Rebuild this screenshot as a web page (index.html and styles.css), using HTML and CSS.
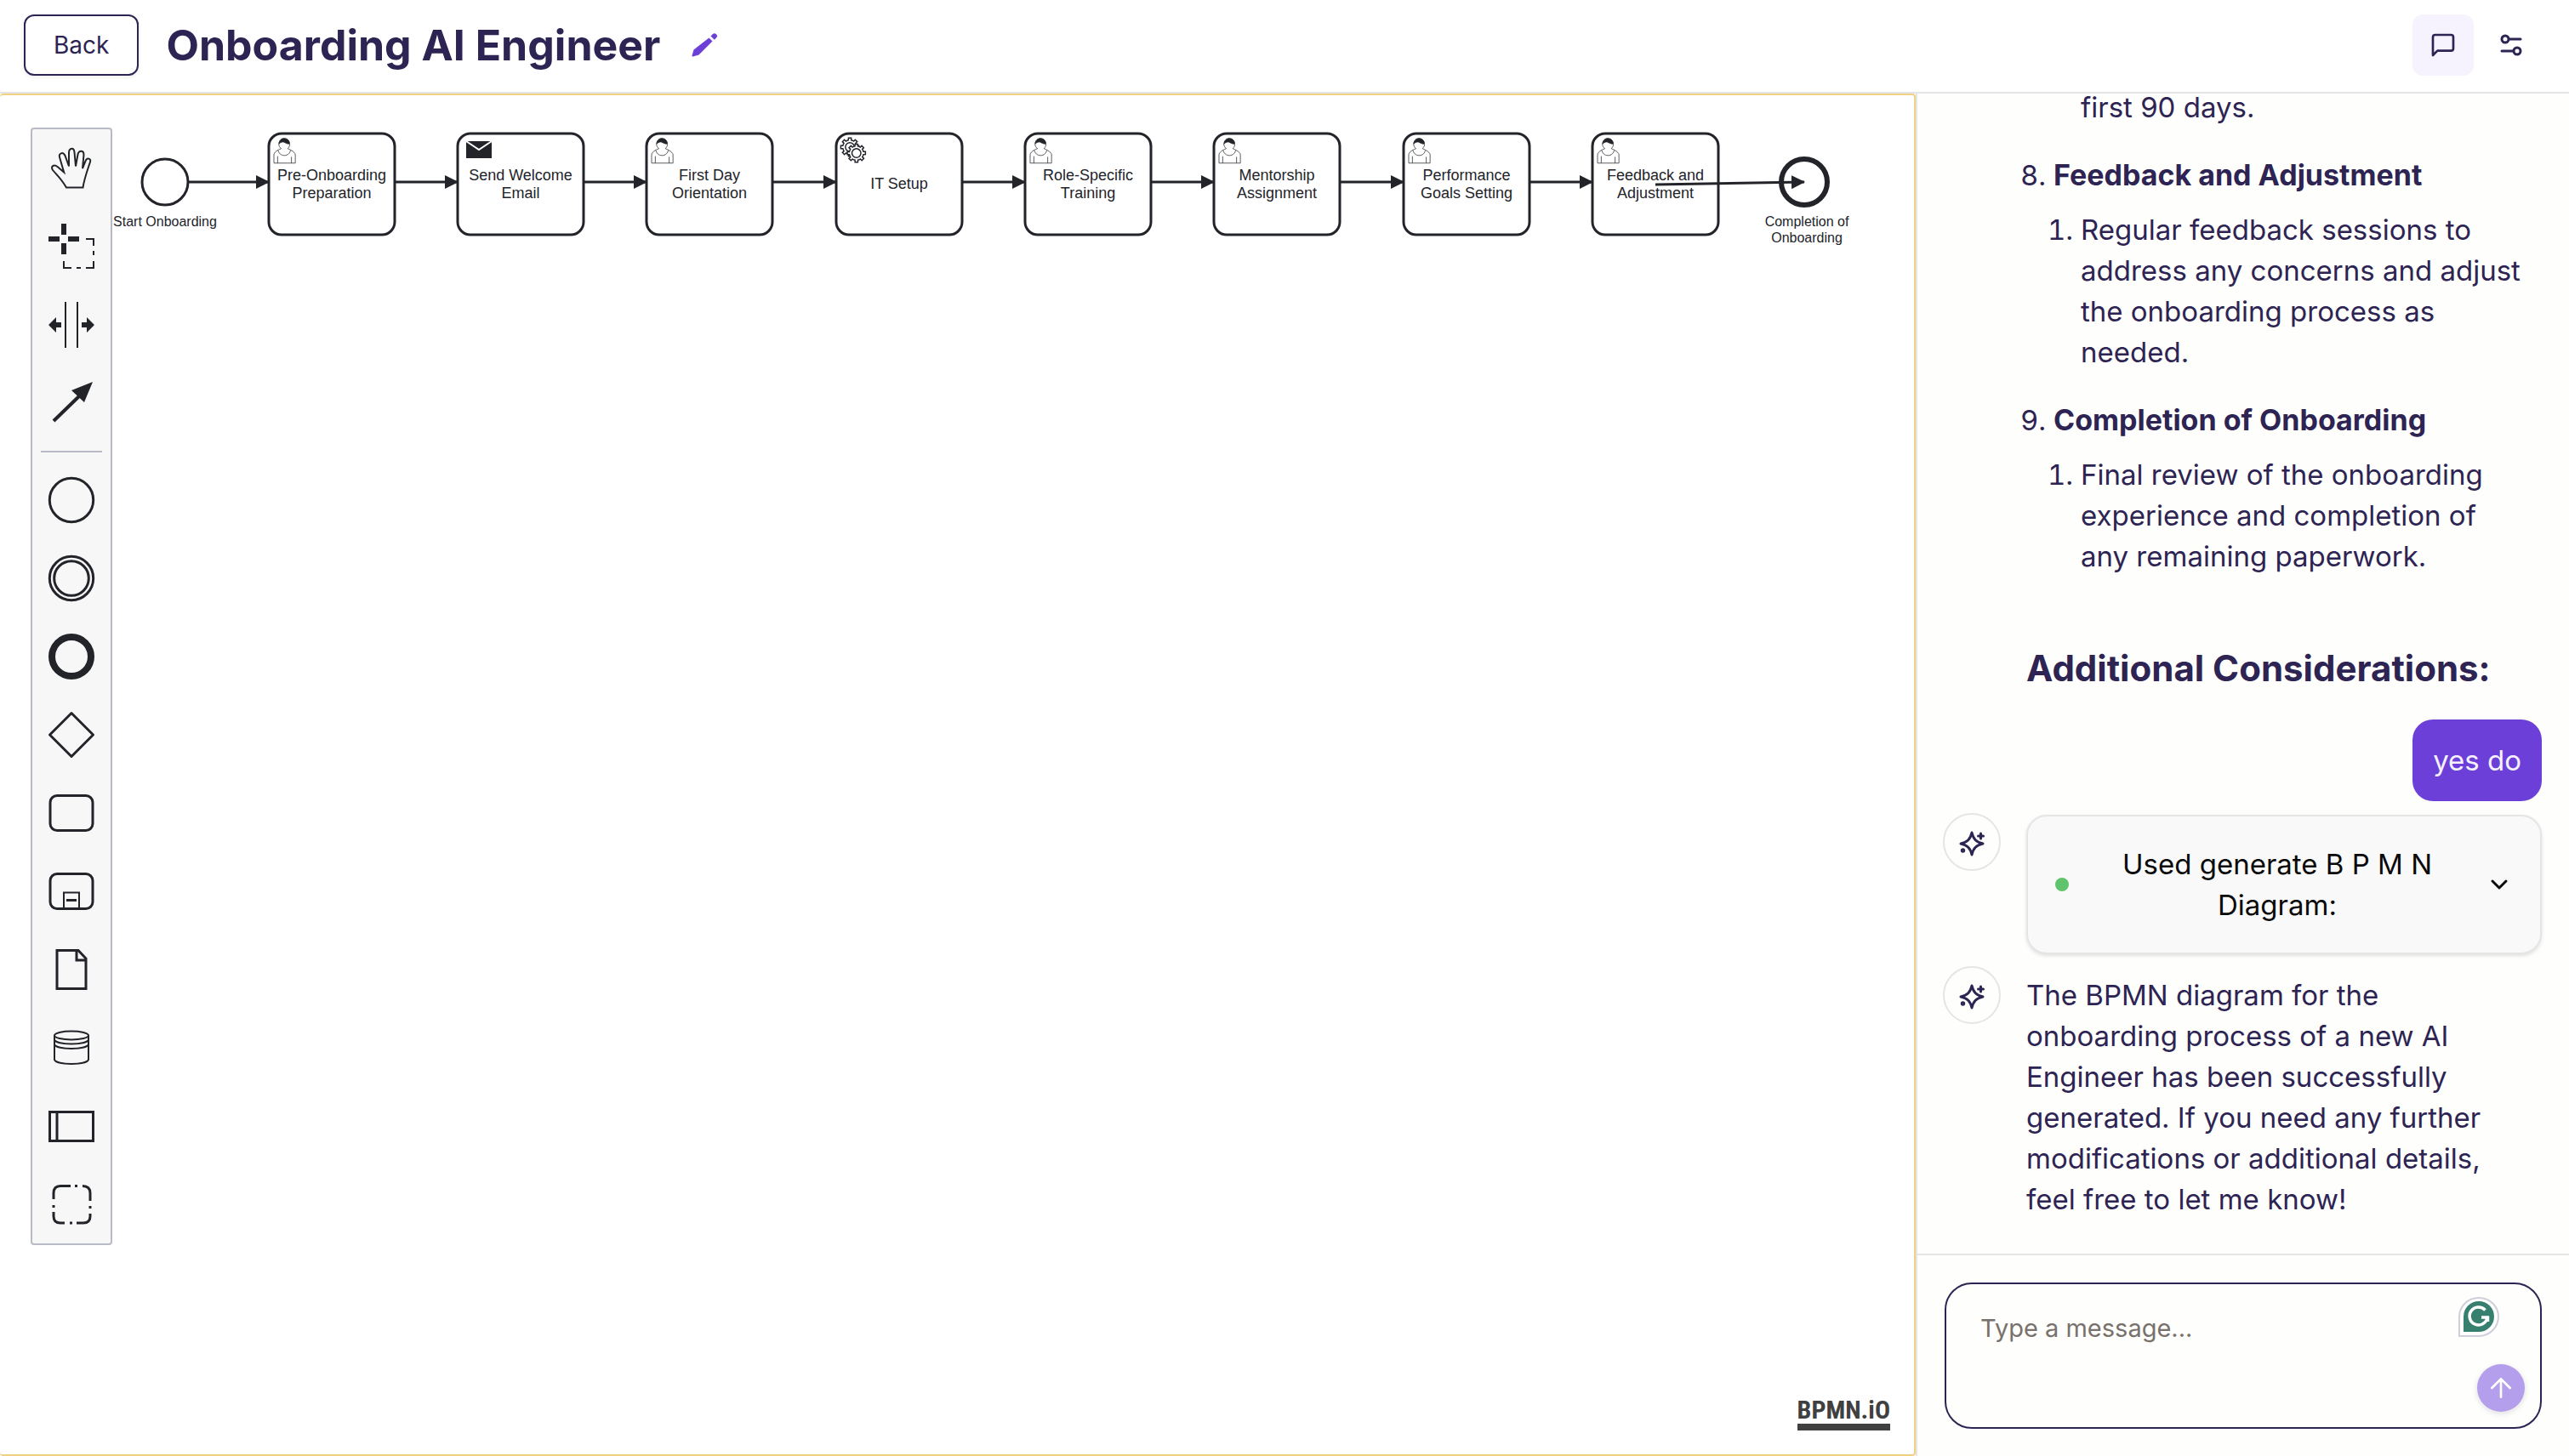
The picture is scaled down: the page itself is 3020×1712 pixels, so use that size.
FILE: index.html
```html
<!DOCTYPE html>
<html lang="en">
<head>
<meta charset="utf-8">
<title>Onboarding AI Engineer</title>
<meta name="viewport" content="width=device-width, initial-scale=1">
<link rel="stylesheet" href="styles.css">
</head>
<body>
<header class="topbar">
  <button class="back" type="button">Back</button>
  <h1 class="title">Onboarding AI Engineer</h1>
  <button class="icon-plain" type="button" aria-label="Rename">
    <svg width="32" height="32" viewBox="0 0 32 32" fill="#6c40d8"><path d="M20.500 7.500l4 4L8.500 27.500 1.500 29.500a.8.8 0 0 1-1-1L2.500 21.500Q12 14 20.500 7.500z" transform="translate(1 0)"/><path d="M22.500 5.500l2.200-2.200a3 3 0 0 1 4.300 4.300L26.800 9.800z" transform="translate(1 0)"/></svg>
  </button>
  <nav class="tools">
    <button class="tool tool-active" type="button" aria-label="Chat">
      <svg width="32" height="32" viewBox="0 0 24 24" fill="none" stroke="#2d2453" stroke-width="2" stroke-linecap="round" stroke-linejoin="round"><path d="M21 15a2 2 0 0 1-2 2H7l-4 4V5a2 2 0 0 1 2-2h14a2 2 0 0 1 2 2z"/></svg>
    </button>
    <button class="tool" type="button" aria-label="Settings">
      <svg width="28" height="28" viewBox="0 0 28 28" fill="none" stroke="#2d2453" stroke-width="3" stroke-linecap="round"><circle cx="7" cy="7" r="4"/><path d="M12 7h13M3 21h13"/><circle cx="21" cy="21" r="4"/></svg>
    </button>
  </nav>
</header>
<main class="workspace">
  <section class="canvas" aria-label="Process diagram">
    <svg class="diagram" width="100%" height="100%">
      <defs>
        <marker id="arrow" viewBox="0 0 16 16" refX="15" refY="8" markerWidth="16" markerHeight="16" markerUnits="userSpaceOnUse" orient="auto"><path d="M0 0L16 8L0 16z" fill="#22242a"/></marker>
        <g id="user" transform="scale(1.480)" stroke="#22242a" stroke-width=".5">
          <path fill="#fff" d="m15 12c.909-.845 1.594-2.049 1.594-3.385 0-2.554-1.805-4.622-4.357-4.622-2.552 0-4.288 2.068-4.288 4.622 0 1.348.974 2.562 1.896 3.405-.529.187-5.669 2.097-5.794 4.756v6.718h17v-6.718c0-2.298-5.528-4.595-6.051-4.776zm-8 6l0 5.500m11 0l0-5"/>
          <path fill="#fff" d="m15 12m2.162 1.009c0 2.447-2.158 4.431-4.821 4.431-2.665 0-4.822-1.981-4.822-4.431"/>
          <path fill="#22242a" d="m15 12m-6.900-3.800c0 0 2.251-2.358 4.274-1.177 2.024 1.181 4.221 1.537 4.124.965-.098-.57-.117-3.791-4.191-4.136-3.572.001-4.208 3.670-4.207 4.348z"/>
        </g>
        <path id="gear" d="m12 18v-1.713c.352-.07.704-.178 1.048-.321.344-.145.666-.321.966-.521l1.194 1.180 1.567-1.577-1.195-1.180c.403-.614.683-1.299.825-2.018l1.622-.01v-2.220l-1.637.01c-.073-.352-.178-.7-.324-1.044-.145-.344-.321-.664-.523-.962l1.131-1.136-1.583-1.563-1.130 1.136c-.614-.401-1.303-.681-2.023-.822l.009-1.619h-2.241l.004 1.631c-.354.074-.705.180-1.050.324-.344.144-.665.321-.964.520l-1.170-1.158-1.567 1.579 1.168 1.157c-.403.613-.683 1.298-.825 2.017l-1.659.003v2.222l1.672-.006c.073.351.180.702.324 1.045.145.344.321.664.523.961l-1.199 1.197 1.584 1.560 1.196-1.193c.614.403 1.303.682 2.023.823l.001 1.699h2.227zm.221-3.996c-1.789.750-3.858-.093-4.610-1.874-.752-1.783.091-3.846 1.880-4.596 1.788-.749 3.857.093 4.609 1.874.752 1.782-.091 3.846-1.880 4.596z"/>
        <g id="service" transform="scale(1.480)" stroke="#22242a" fill="#fff"><use href="#gear"/><circle cx="16.300" cy="15.500" r="5" stroke="none"/><use href="#gear" x="5.200" y="4.800"/></g>
        <g id="send"><path fill="#22242a" d="M10 9h30v20H10z"/><path d="M10 9L25 19L40 9" fill="none" stroke="#fff" stroke-width="2"/></g>
      </defs>

      <g class="shape">
        <circle cx="194" cy="102" r="27"/>
        <circle cx="2121" cy="102" r="27" stroke-width="6"/>
        <rect x="316" y="45" width="148" height="119" rx="15"/>
        <rect x="538" y="45" width="148" height="119" rx="15"/>
        <rect x="760" y="45" width="148" height="119" rx="15"/>
        <rect x="983" y="45" width="148" height="119" rx="15"/>
        <rect x="1205" y="45" width="148" height="119" rx="15"/>
        <rect x="1427" y="45" width="148" height="119" rx="15"/>
        <rect x="1650" y="45" width="148" height="119" rx="15"/>
        <rect x="1872" y="45" width="148" height="119" rx="15"/>
      </g>
      <use href="#user" transform="translate(316 45)"/>
      <use href="#send" transform="translate(538 45)"/>
      <use href="#user" transform="translate(760 45)"/>
      <use href="#service" transform="translate(983 45)"/>
      <use href="#user" transform="translate(1205 45)"/>
      <use href="#user" transform="translate(1427 45)"/>
      <use href="#user" transform="translate(1650 45)"/>
      <use href="#user" transform="translate(1872 45)"/>

      <g class="task-text">
        <text><tspan x="390" y="100">Pre-Onboarding</tspan><tspan x="390" y="121">Preparation</tspan></text>
        <text><tspan x="612" y="100">Send Welcome</tspan><tspan x="612" y="121">Email</tspan></text>
        <text><tspan x="834" y="100">First Day</tspan><tspan x="834" y="121">Orientation</tspan></text>
        <text x="1057" y="110">IT Setup</text>
        <text><tspan x="1279" y="100">Role-Specific</tspan><tspan x="1279" y="121">Training</tspan></text>
        <text><tspan x="1501" y="100">Mentorship</tspan><tspan x="1501" y="121">Assignment</tspan></text>
        <text><tspan x="1724" y="100">Performance</tspan><tspan x="1724" y="121">Goals Setting</tspan></text>
        <text><tspan x="1946" y="100">Feedback and</tspan><tspan x="1946" y="121">Adjustment</tspan></text>
      </g>
      <g class="event-text">
        <text x="194" y="154">Start Onboarding</text>
        <text><tspan x="2124" y="154">Completion of</tspan><tspan x="2124" y="173">Onboarding</tspan></text>
      </g>

      <g class="flow">
        <path d="M221 102H316"/><path d="M464 102H538"/><path d="M686 102H760"/><path d="M908 102H983"/>
        <path d="M1131 102H1205"/><path d="M1353 102H1427"/><path d="M1575 102H1650"/><path d="M1798 102H1872"/>
        <path d="M1946 105L2121 102"/>
      </g>
    </svg>

    <div class="palette" role="toolbar" aria-label="Diagram tools">
      <button type="button" aria-label="Hand tool"><svg viewBox="0 0 92 92"><path stroke-width="2" d="M40 68.500H59.500C61 58 65.500 46 68 38.500C69.500 34 64 33 62.500 37.500L59 46L60.500 30C60.500 24 54.500 24.500 53.500 29.500L51 43.500L49.500 27C49 21 43.500 21.500 43 27L43 43.500L38.500 31C36 26 30.500 28 32.200 33.500L37.200 50.500L29.500 44C25.500 41 21 43.500 24 48C28 53 34 58 40 68.500z"/></svg></button>
      <button type="button" aria-label="Lasso tool"><svg viewBox="0 0 92 92"><path class="solid" d="M19 34h13v6H19zM42 34h13v6H42zM34 19h6v13h-6zM34 42h6v13h-6z"/><path stroke-width="2" d="M63 37h9v8M72 51v5M72 63v8h-9M57 71h-5M46 71h-9v-8"/></svg></button>
      <button type="button" aria-label="Space tool"><svg viewBox="0 0 92 92"><path stroke-width="2" d="M39 19v54M53 19v54"/><path class="solid" d="M19 46l9-9v6h6v6h-6v6zM73 46l-9-9v6h-6v6h6v6z"/></svg></button>
      <button type="button" aria-label="Connect tool"><svg viewBox="0 0 92 92"><path stroke-width="4" d="M25 67L58 35"/><path class="solid" d="M71 21L46 31L61 45z"/></svg></button>
      <hr>
      <button type="button" aria-label="Start event"><svg viewBox="0 0 92 92"><circle cx="46" cy="46" r="25.700"/></svg></button>
      <button type="button" aria-label="Intermediate event"><svg viewBox="0 0 92 92"><circle cx="46" cy="46" r="25.700"/><circle cx="46" cy="46" r="20.300"/></svg></button>
      <button type="button" aria-label="End event"><svg viewBox="0 0 92 92"><circle cx="46" cy="46" r="23" stroke-width="8"/></svg></button>
      <button type="button" aria-label="Gateway"><svg viewBox="0 0 92 92"><path stroke-linejoin="round" d="M46 20.500L71.500 46L46 71.500L20.500 46z"/></svg></button>
      <button type="button" aria-label="Task"><svg viewBox="0 0 92 92"><rect x="21" y="25.500" width="50" height="41" rx="8"/></svg></button>
      <button type="button" aria-label="Sub-process"><svg viewBox="0 0 92 92"><rect x="21" y="25.500" width="50" height="41" rx="8"/><path stroke-width="2" d="M37 66V47.500H55V66"/><path stroke-width="3" d="M40 56.500h12"/></svg></button>
      <button type="button" aria-label="Data object"><svg viewBox="0 0 92 92"><path d="M29 23.500H54L63 33V68.500H29zM52 23.500V35H63"/></svg></button>
      <button type="button" aria-label="Data store"><svg viewBox="0 0 92 92"><g stroke-width="2"><ellipse cx="46" cy="31.500" rx="20" ry="5"/><path d="M26 31.500V60C28 66.500 64 66.500 66 60V31.500M26 36.500C28 43 64 43 66 36.500M26 42C28 48.500 64 48.500 66 42"/></g></svg></button>
      <button type="button" aria-label="Participant"><svg viewBox="0 0 92 92"><path d="M20.500 29.500H71.500V63.500H20.500zM29 29V64"/></svg></button>
      <button type="button" aria-label="Group"><svg viewBox="0 0 92 92"><path d="M25 40V33Q25 24.500 33 24.500H45M50 24.500h3M59 24.500Q68 24.500 68 33V42M68 48v3M68 57V60Q68 68 60 68H52M47 68h-3M38 68H33Q25 68 25 60V55M25 50v-3"/></svg></button>
    </div>

    <a class="logo" href="#bpmn-io">BPMN.iO</a>
  </section>

  <aside class="chat">
    <div class="messages">
      <article class="message">
        <div class="message-body">
          <ol class="steps" start="8">
            <li class="continued"><p class="detail">first 90 days.</p></li>
            <li value="8"><strong>Feedback and Adjustment</strong>
              <ol><li>Regular feedback sessions to address any concerns and adjust the onboarding process as needed.</li></ol></li>
            <li><strong>Completion of Onboarding</strong>
              <ol><li>Final review of the onboarding experience and completion of any remaining paperwork.</li></ol></li>
          </ol>
          <h2>Additional Considerations:</h2>
        </div>
      </article>
      <p class="bubble">yes do</p>
      <article class="message">
        <span class="avatar"><svg width="36" height="36" viewBox="0 0 36 36"><use href="#sparkles"/></svg></span>
        <button class="tool-card" type="button">
          <span class="dot"></span>
          <span class="tool-name">Used generate B P M N Diagram:</span>
          <svg width="32" height="32" viewBox="0 0 32 32" fill="none" stroke="#0a0a0a" stroke-width="3" stroke-linecap="round" stroke-linejoin="round"><path d="M8 12l8 8 8-8"/></svg>
        </button>
      </article>
      <article class="message">
        <span class="avatar"><svg width="36" height="36" viewBox="0 0 36 36"><use href="#sparkles"/></svg></span>
        <p class="answer">The BPMN diagram for the onboarding process of a new AI Engineer has been successfully generated. If you need any further modifications or additional details, feel free to let me know!</p>
      </article>
    </div>
    <form class="composer">
      <div class="field">
        <textarea aria-label="Message" placeholder="Type a message..."></textarea>
        <span class="grammar"><svg width="48" height="48" viewBox="0 0 48 48"><path d="M1 46V23A23 22 0 0 1 47 23A23 23 0 0 1 24 46z" fill="#fff" stroke="#cfcfdc" stroke-width="2"/><path d="M6 41V23A18 18 0 1 1 24 41z" fill="#37806f"/><path d="M31.500 15.500A10.500 10.500 0 1 0 34 24H27M34.500 22.500V29" fill="none" stroke="#fff" stroke-width="3.500"/></svg></span>
        <button class="send" type="submit" aria-label="Send"><svg width="32" height="32" viewBox="0 0 24 24" fill="none" stroke="#fff" stroke-width="2" stroke-linecap="round" stroke-linejoin="round"><path d="M12 20V4M4 12l8-8 8 8"/></svg></button>
      </div>
    </form>
  </aside>
</main>
<svg class="sprite" width="0" height="0" aria-hidden="true"><defs>
  <g id="sparkles" fill="none" stroke="#2d2453" stroke-width="3" stroke-linecap="round" stroke-linejoin="round"><path d="M18 7C19.800 14.800 23.200 18.200 31 20C23.200 21.800 19.800 25.200 18 33C16.200 25.200 12.800 21.800 5 20C12.800 18.200 16.200 14.800 18 7z"/><path d="M28.500 8v6M25.500 11h6"/><circle cx="7.500" cy="28" r="1.200"/></g>
</defs></svg>
</body>
</html>
```
FILE: styles.css
```css
* { box-sizing: border-box; }

body {
  margin: 0;
  height: 100vh;
  display: flex;
  flex-direction: column;
  font-family: Inter, "Noto Sans", sans-serif;
  font-size: 33px;
  line-height: 48px;
  color: #2d2453;
  background: #fff;
}

button {
  font: inherit;
  color: inherit;
  background: none;
  border: 0;
  padding: 0;
  cursor: pointer;
}

svg { display: block; }
p, h1, h2 { margin: 0; }
.sprite { position: absolute; }

/* Top bar */
.topbar {
  display: flex;
  align-items: center;
  padding: 17px 32px 19px 28px;
  border-bottom: 2px solid #e5e5e8;
}
.back {
  height: 72px;
  padding: 0 33px;
  font-size: 28px;
  background: #fff;
  border: 2px solid #2d2453;
  border-radius: 12px;
  box-shadow: 0 2px 4px rgba(45, 36, 83, .08);
}
.title {
  margin-left: 32px;
  font-size: 50px;
  font-weight: 700;
  line-height: 64px;
}
.icon-plain { margin-left: 36px; }
.tools {
  display: flex;
  gap: 8px;
  margin-left: auto;
}
.tool {
  display: grid;
  place-items: center;
  width: 72px;
  height: 72px;
  border-radius: 12px;
}
.tool-active { background: #f6f3fe; }

/* Workspace */
.workspace {
  flex: 1;
  min-height: 0;
  display: flex;
}
.canvas {
  position: relative;
  flex: 1;
  min-width: 0;
  padding: 38px 36px;
  border: 2px solid #f0d182;
  border-left: 0;
  border-radius: 4px;
}
.diagram {
  position: absolute;
  inset: 0;
  font-family: "Liberation Sans", Arial, sans-serif;
}
.shape { fill: #fff; stroke: #22242a; stroke-width: 3; }
.flow { fill: none; stroke: #22242a; stroke-width: 3; }
.flow path { marker-end: url(#arrow); }
.task-text, .event-text { fill: #22242a; text-anchor: middle; font-size: 18px; }
.event-text { font-size: 16px; }

.palette {
  position: relative;
  display: flex;
  flex-direction: column;
  width: 96px;
  background: #f7f7f7;
  border: 2px solid #b8bac6;
  border-radius: 4px;
}
.palette button { height: 92px; }
.palette svg { fill: none; stroke: #22242a; stroke-width: 3; }
.palette .solid { fill: #22242a; stroke: none; }
.palette hr {
  width: 72px;
  margin: 10px auto;
  border: 0;
  border-top: 2px solid #b8bac6;
}

.logo {
  position: absolute;
  right: 28px;
  bottom: 28px;
  font-family: "Roboto Condensed", "Open Sans Condensed", "Liberation Sans", sans-serif;
  font-size: 30px;
  font-weight: 700;
  line-height: 32px;
  color: #404040;
  text-decoration: none;
  border-bottom: 8px solid #404040;
}

/* Chat */
.chat {
  display: flex;
  flex-direction: column;
  width: 768px;
  background: #fefefc;
  border-left: 2px solid #e5e5e8;
}
.messages {
  flex: 1;
  min-height: 0;
  overflow: hidden;
  display: flex;
  flex-direction: column;
  justify-content: flex-end;
  gap: 14px;
  padding: 0 32px 40px 30px;
}
.message {
  flex: none;
  display: flex;
  gap: 30px;
}
.message-body { margin-left: 98px; }
.steps, .steps ol { margin: 0; padding-left: 32px; }
.steps > li { margin-bottom: 32px; }
.steps > li > ol { margin-top: 16px; padding-right: 16px; }
.steps .continued { list-style: none; }
.steps strong { font-size: 34px; }
.detail { padding-left: 32px; }
.message h2 {
  margin: 76px 0 14px;
  font-size: 42px;
  line-height: 64px;
}
.bubble {
  flex: none;
  align-self: flex-end;
  padding: 24px;
  color: #f6f1fe;
  background: #6c40d8;
  border-radius: 24px;
}
.avatar {
  flex: none;
  display: grid;
  place-items: center;
  width: 68px;
  height: 68px;
  border: 2px solid #e5e5e5;
  border-radius: 50%;
}
.tool-card {
  flex: 1;
  display: flex;
  align-items: center;
  margin-top: 2px;
  padding: 32px;
  color: #0a0a0a;
  background: #f9f9f9;
  border: 2px solid #e5e5e5;
  border-radius: 24px;
  box-shadow: 0 2px 4px rgba(0, 0, 0, .12);
}
.dot {
  width: 16px;
  height: 16px;
  background: #60c46c;
  border-radius: 50%;
}
.tool-name { flex: 1; padding: 0 40px; }
.answer { padding: 10px 24px 0 0; }

.composer {
  padding: 32px;
  border-top: 2px solid #e5e5e5;
}
.field { position: relative; }
.field textarea {
  display: block;
  width: 100%;
  height: 172px;
  padding: 32px 40px;
  font: inherit;
  font-size: 29px;
  line-height: 40px;
  color: inherit;
  background: none;
  border: 2px solid #2d2453;
  border-radius: 32px;
  resize: none;
}
.field textarea::placeholder { color: #78716c; }
.grammar {
  position: absolute;
  top: 17px;
  right: 50px;
}
.send {
  position: absolute;
  right: 20px;
  bottom: 20px;
  display: grid;
  place-items: center;
  width: 56px;
  height: 56px;
  background: #b49fec;
  border-radius: 50%;
  box-shadow: 0 2px 6px rgba(45, 36, 83, .15);
}
```
